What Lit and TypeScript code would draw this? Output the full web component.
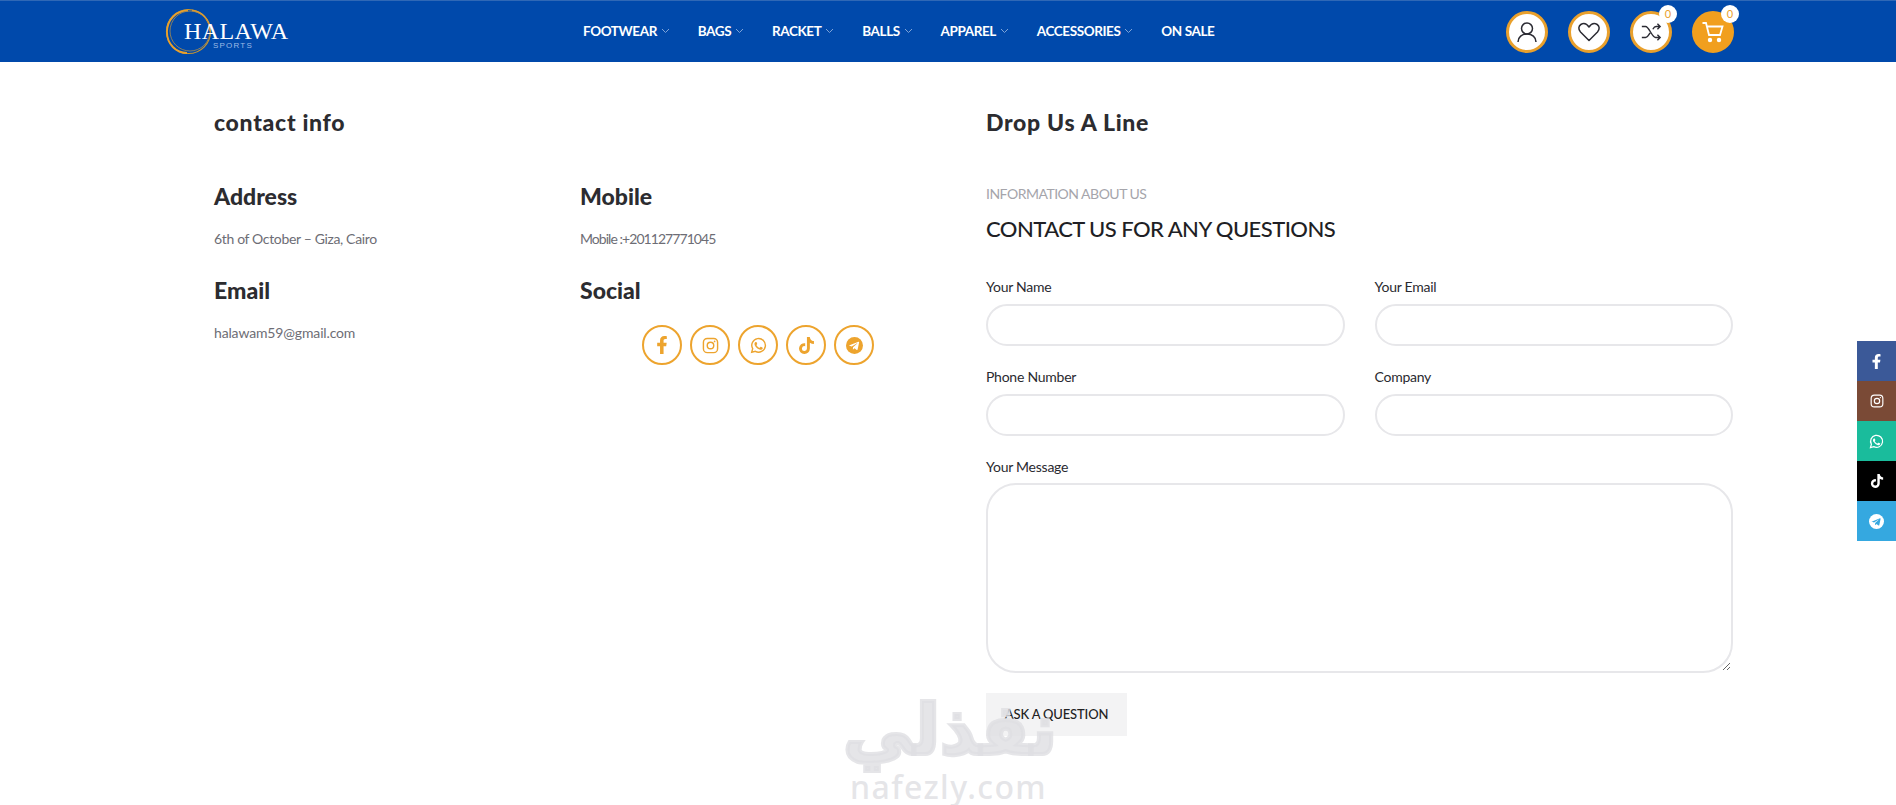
import { LitElement, html, css, svg } from "lit";
import { customElement } from "lit/decorators.js";

const fb = (s: number) => html`<svg width=${s} height=${s} viewBox="0 0 320 512" fill="currentColor"><path d="M279.14 288l14.22-92.66h-88.91v-60.13c0-25.35 12.42-50.06 52.24-50.06h40.42V6.26S260.43 0 225.36 0c-73.22 0-121.08 44.38-121.08 124.72v70.62H22.89V288h81.39v224h100.17V288z"/></svg>`;
const ig = (s: number) => html`<svg width=${s} height=${s} viewBox="0 0 24 24" fill="none" stroke="currentColor" stroke-width="2"><rect x="2" y="2" width="20" height="20" rx="5.5"/><circle cx="12" cy="12" r="4.6"/><circle cx="17.8" cy="6.2" r="1.2" fill="currentColor" stroke="none"/></svg>`;
const wa = (s: number) => html`<svg width=${s} height=${s} viewBox="0 0 24 24" fill="none" stroke="currentColor"><path stroke-width="2" d="M2.4 21.6l1.4-5.1A9.6 9.6 0 1 1 7.6 20.2z"/><path fill="currentColor" stroke="none" d="M9 7.1c-.3-.6-.5-.6-.8-.6h-.7c-.3 0-.6.1-.9.4-.3.4-1.2 1.100-1.200 2.800s1.200 3.200 1.400 3.500c.2.200 2.300 3.700 5.700 5 2.800 1.100 3.400.9 4 .8.600-.1 2-.8 2.200-1.600.3-.8.3-1.400.2-1.600-.1-.1-.3-.2-.7-.4l-2.300-1.100c-.3-.1-.5-.2-.8.2l-1 1.300c-.2.200-.4.200-.7.100-.4-.2-1.500-.6-2.800-1.800-1-.9-1.700-2-1.900-2.400-.2-.3 0-.5.200-.7l.5-.6c.2-.2.200-.3.400-.6.100-.2.100-.4 0-.6z" transform="translate(1.700 1.600) scale(.86)"/></svg>`;
const tt = (s: number) => html`<svg width=${s} height=${s} viewBox="0 0 448 512" fill="currentColor"><path d="M448,209.91a210.06,210.06,0,0,1-122.77-39.25V349.38A162.55,162.55,0,1,1,185,188.31V278.2a74.62,74.62,0,1,0,52.23,71.18V0l88,0a121.18,121.18,0,0,0,1.86,22.17h0A122.18,122.18,0,0,0,381,102.39a121.43,121.43,0,0,0,67,20.14Z"/></svg>`;
const tg = (s: number, cut: string) => html`<svg width=${s} height=${s} viewBox="0 0 24 24"><circle cx="12" cy="12" r="12" fill="currentColor"/><path fill=${cut} d="M5 11.800l12.600-5c.6-.2 1.100.2.900 1l-2.100 10c-.2.700-.6.900-1.200.5l-3.200-2.400-1.600 1.500c-.2.200-.4.300-.7.300l.2-3.300 6-5.400c.3-.3-.1-.4-.4-.2l-7.400 4.700-3.200-1c-.7-.2-.7-.7.100-1z"/></svg>`;

const socials = [
  { icon: fb, size: 18 },
  { icon: ig, size: 17 },
  { icon: wa, size: 17 },
  { icon: tt, size: 17 },
  { icon: null, size: 17 },
];
const nav = ["FOOTWEAR", "BAGS", "RACKET", "BALLS", "APPAREL", "ACCESSORIES"];
const chevron = svg`<path d="M1 1l3.500 3.500L8 1" fill="none" stroke="#7fa4d8" stroke-width="1"/>`;

@customElement("app-root")
export class AppRoot extends LitElement {
  static styles = css`
    :host { display: block; position: relative; height: 805px; overflow: hidden; background: #fff; font-family: "Lato", "Open Sans", sans-serif; color: #222; }
    * { box-sizing: border-box; }
    header { height: 62px; background: #0049ab; border-top: 1px solid #2f68b6; display: flex; align-items: center; padding: 0 162px 0 165px; }
    .logo { position: relative; width: 122px; height: 48px; flex: none; }
    .ring { position: absolute; left: 0; top: 0; width: 47px; height: 47px; }
    .logo-name { position: absolute; left: 19px; top: 10px; font: 24px/26px "Liberation Serif", serif; color: #fff; letter-spacing: .4px; white-space: nowrap; }
    .logo-sub { position: absolute; left: 48px; top: 33px; font: 8px/10px "Liberation Sans", sans-serif; color: #9dbbe6; letter-spacing: 1.200px; }
    nav { display: flex; align-items: center; margin-left: 296px; }
    .nav-item { display: flex; align-items: center; gap: 4px; font-size: 13.500px; font-weight: 700; letter-spacing: -.4px; color: #fff; white-space: nowrap; margin-right: 27.800px; position: relative; top: -1px; }
    .nav-item svg { margin-top: 1px; }
    .icons { margin-left: auto; display: flex; gap: 20px; }
    .ib { position: relative; width: 42px; height: 42px; border-radius: 50%; background: #fff; border: 3px solid #e9a02c; display: flex; align-items: center; justify-content: center; color: #2b2b33; }
    .ib.cart { background: #f19f1e; border-color: #f19f1e; color: #fff; }
    .badge { position: absolute; right: -8px; top: -9px; width: 18px; height: 18px; border-radius: 50%; background: #fff; color: #e9a02c; font-size: 11px; line-height: 18px; text-align: center; }

    main { display: grid; grid-template-columns: 772px 747px; padding: 41px 0 0 214px; }
    h2, h3 { margin: 0; font-family: "Lato", sans-serif; font-weight: 900; color: #2c2c30; }
    h2 { font-size: 23px; line-height: 38px; letter-spacing: .7px; }
    .info { display: grid; grid-template-columns: 356px 356px; column-gap: 10px; margin-top: 37px; }
    .cell { height: 94px; }
    h3 { font-size: 23px; line-height: 36px; }
    .cell p { margin: 15px 0 0; font-size: 14px; line-height: 20px; color: #6d6d75; white-space: nowrap; letter-spacing: -.35px; }
    .cell p.tight { letter-spacing: -.95px; }
    .cell p.mail { letter-spacing: -.15px; }
    .social { display: flex; justify-content: center; gap: 8px; margin-top: 17px; }
    .sc { width: 40px; height: 40px; border-radius: 50%; border: 2px solid #eda42e; color: #eda42e; display: flex; align-items: center; justify-content: center; }
    .eyebrow { margin: 43px 0 0; font-size: 14px; line-height: 20px; color: #a5a5ab; letter-spacing: -.5px; }
    .title { margin: 10px 0 0; font-size: 22px; line-height: 30px; font-weight: 500; color: #1f1f25; letter-spacing: -.55px; }
    form { display: grid; grid-template-columns: 1fr 1fr; column-gap: 30px; margin-top: 33px; }
    label { display: block; font-size: 14px; line-height: 20px; color: #2a2a30; height: 90px; letter-spacing: -.25px; }
    label.wide { grid-column: 1 / -1; height: auto; }
    .field { display: block; width: 100%; margin: 7px 0 0; padding: 0 20px; height: 42px; border: 2px solid #e7e7ea; border-radius: 21px; background: #fff; outline: none; }
    textarea.field { height: 190px; margin-top: 6px; border-radius: 30px; padding: 15px 20px; resize: vertical; font: inherit; }
    .btn { margin: 20px 0 0; width: 141px; height: 43px; border: 0; background: #f3f3f4; font: 500 13px/43px "Lato", sans-serif; letter-spacing: -.15px; color: #222; padding: 0; }

    .rail { position: absolute; right: 0; top: 341px; width: 39px; display: flex; flex-direction: column; }
    .rail a { height: 40px; display: flex; align-items: center; justify-content: center; color: #fff; }
    .r0 { background: #3b5998; } .r1 { background: #7a4a36; } .r2 { background: #1abc9c; } .r3 { background: #000; } .r4 { background: #35a8e0; }

    .wm { position: absolute; left: 820px; top: 670px; width: 260px; height: 135px; pointer-events: none; color: rgba(222, 222, 226, .8); text-align: center; }
    .wm-ar { font: 700 70px/80px "DejaVu Sans", sans-serif; margin-top: 20px; -webkit-text-stroke: 4px rgba(222, 222, 226, .8); }
    .wm-en { position: absolute; left: 30px; top: 100px; font: 500 32px/34px "Noto Sans", sans-serif; letter-spacing: 1.400px; white-space: nowrap; }
  `;

  renderSocial(s: (typeof socials)[number]) {
    return s.icon ? s.icon(s.size) : tg(s.size, "#fff");
  }

  render() {
    const rail = [fb(15), ig(14), wa(15), tt(14), tg(15, "#35a8e0")];
    return html`
      <header>
        <div class="logo">
          <svg class="ring" viewBox="0 0 47 47" fill="none">
            <circle cx="23.500" cy="23.500" r="22" stroke="#c9962f" stroke-width="1.200"/>
            <path d="M23 2.500C11 2.500 2 12 2 24s9 21 20 21" stroke="#e9a02c" stroke-width="1.800"/>
            <path d="M27 2.500c10 1 18 9.500 18 20.500" stroke="#e9a02c" stroke-width="1.500"/>
            <circle cx="25" cy="23" r="20" stroke="#a98b4e" stroke-width=".8"/>
          </svg>
          <span class="logo-name">HALAWA</span>
          <span class="logo-sub">SPORTS</span>
        </div>
        <nav>
          ${nav.map((n) => html`<span class="nav-item">${n}<svg width="9" height="6" viewBox="0 0 9 6">${chevron}</svg></span>`)}
          <span class="nav-item">ON SALE</span>
        </nav>
        <div class="icons">
          <div class="ib"><svg width="24" height="24" viewBox="0 0 24 24" fill="none" stroke="currentColor" stroke-width="1.500"><circle cx="12" cy="8.500" r="5.500"/><path d="M3 22c0-5 4-8 9-8s9 3 9 8"/></svg></div>
          <div class="ib"><svg width="24" height="24" viewBox="0 0 24 24" fill="none" stroke="currentColor" stroke-width="1.500"><path d="M12 20.500L3.500 12C1 9.300 1.500 6 3.800 4.500c2.700-1.600 6-.7 8.200 2.500 2.200-3.200 5.500-4.100 8.200-2.500 2.300 1.500 2.800 4.800.3 7.500z" stroke-linejoin="round"/></svg></div>
          <div class="ib"><svg width="22" height="22" viewBox="0 0 24 24" fill="none" stroke="currentColor" stroke-width="1.500"><path d="M2 6h4c4 0 7 12 11 12h5M2 18h4c2 0 3.500-2.500 5-5M14 9c1-1.800 2-3 3.500-3H22M19 3l3 3-3 3M19 15l3 3-3 3"/></svg><span class="badge">0</span></div>
          <div class="ib cart"><svg width="24" height="24" viewBox="0 0 24 24" fill="none" stroke="currentColor" stroke-width="1.800"><path d="M1.500 3H5l3 12h11l2.500-8.500H6"/><circle cx="9" cy="20" r="1.300" fill="currentColor"/><circle cx="18" cy="20" r="1.300" fill="currentColor"/></svg><span class="badge">0</span></div>
        </div>
      </header>
      <main>
        <section>
          <h2>contact info</h2>
          <div class="info">
            <div class="cell"><h3>Address</h3><p>6th of October – Giza, Cairo</p></div>
            <div class="cell"><h3>Mobile</h3><p class="tight">Mobile :+201127771045</p></div>
            <div class="cell"><h3>Email</h3><p class="mail">halawam59@gmail.com</p></div>
            <div class="cell"><h3>Social</h3>
              <div class="social">${socials.map((s) => html`<a class="sc">${this.renderSocial(s)}</a>`)}</div>
            </div>
          </div>
        </section>
        <section>
          <h2>Drop Us A Line</h2>
          <p class="eyebrow">INFORMATION ABOUT US</p>
          <p class="title">CONTACT US FOR ANY QUESTIONS</p>
          <form>
            <label>Your Name<input class="field" /></label>
            <label>Your Email<input class="field" /></label>
            <label>Phone Number<input class="field" /></label>
            <label>Company<input class="field" /></label>
            <label class="wide">Your Message<textarea class="field"></textarea></label>
            <button type="button" class="btn">ASK A QUESTION</button>
          </form>
        </section>
      </main>
      <div class="rail">
        ${rail.map((icon, i) => html`<a class="r${i}">${icon}</a>`)}
      </div>
      <div class="wm" aria-hidden="true">
        <div class="wm-ar">نفذلي</div>
        <div class="wm-en">nafezly.com</div>
      </div>
    `;
  }
}
